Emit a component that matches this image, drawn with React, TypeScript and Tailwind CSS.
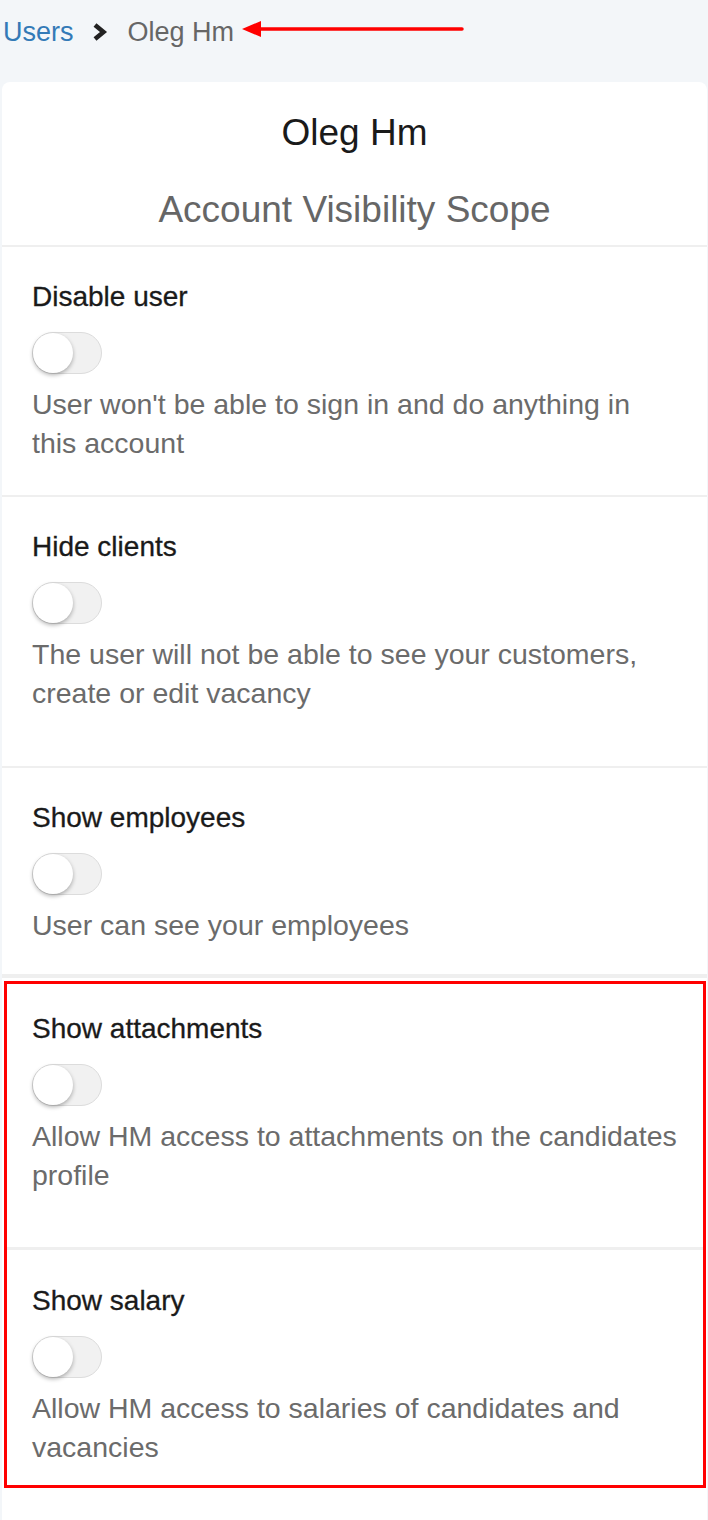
import React from 'react'

interface Setting {
  title: string
  description: string
  pad: string
}

const topSettings: Setting[] = [
  { title: 'Disable user', description: "User won't be able to sign in and do anything in this account", pad: 'pt-[33px] pb-[32px]' },
  { title: 'Hide clients', description: 'The user will not be able to see your customers, create or edit vacancy', pad: 'pt-[33px] pb-[53px]' },
  { title: 'Show employees', description: 'User can see your employees', pad: 'pt-[33px] pb-[29px]' },
]

function Toggle() {
  return (
    <div className="relative w-[70px] h-[42px] rounded-full bg-[#f1f1f1] border border-[#dcdcdc]">
      <div className="absolute left-0 top-0 w-[40px] h-[40px] rounded-full bg-white shadow-[0_2px_4px_rgba(0,0,0,0.3)]" />
    </div>
  )
}

function SettingRow({ setting, className }: { setting: Setting; className: string }) {
  return (
    <div className={className}>
      <div className="text-[28px] leading-[34px] text-[#1a1a1a] [-webkit-text-stroke:0.3px_#1a1a1a]">{setting.title}</div>
      <div className="mt-[18px]">
        <Toggle />
      </div>
      <p className="mt-[11px] text-[28.5px] leading-[39px] text-[#6b6b6b] pr-[20px]">{setting.description}</p>
    </div>
  )
}

export default function App() {
  return (
    <div className="min-h-[1520px] bg-[#f3f6f9] font-['Liberation_Sans',Arial,sans-serif]">
      {/* Breadcrumb */}
      <div className="h-[82px] pt-[14px] pl-[3px] flex items-start">
        <div className="flex items-center h-[36px]">
          <span className="text-[27px] leading-[36px] text-[#337ab7]">Users</span>
          <svg className="ml-[18px]" width="16" height="20" viewBox="0 0 16 20" fill="none">
            <polyline points="3,3 11.5,10 3,17" stroke="#222" strokeWidth="4.5" strokeLinejoin="miter" />
          </svg>
          <span className="ml-[20px] text-[27px] leading-[36px] text-[#666]">Oleg Hm</span>
          <svg className="ml-[8px] -mt-[7px]" width="222" height="20" viewBox="0 0 222 20" fill="none">
            <line x1="17" y1="10" x2="220" y2="10" stroke="#f00" strokeWidth="3.5" strokeLinecap="round" />
            <polygon points="0,10 19,2 19,18" fill="#f00" />
          </svg>
        </div>
      </div>

      {/* Card */}
      <div className="ml-[2px] mr-[1px] bg-white rounded-t-[8px] min-h-[1438px]">
        <div className="pt-[29px] pb-[13px] text-center">
          <div className="text-[37px] leading-[44px] text-[#1a1a1a]">Oleg Hm</div>
          <div className="mt-[33px] text-[37px] leading-[44px] text-[#666]">Account Visibility Scope</div>
        </div>

        {topSettings.map((s) => (
          <div key={s.title}>
            <div className="h-[2px] bg-[#efefef]" />
            <SettingRow setting={s} className={`px-[30px] ${s.pad}`} />
          </div>
        ))}
        <div className="h-[4px] bg-[#efefef]" />

        {/* Highlighted block */}
        <div className="mt-[3px] ml-[2px] mr-[1px] border-[3px] border-[#ff0000]">
          <SettingRow
            setting={{ title: 'Show attachments', description: 'Allow HM access to attachments on the candidates profile', pad: '' }}
            className="pl-[25px] pt-[28px] pb-[52px]"
          />
          <div className="h-[3px] bg-[#efefef]" />
          <SettingRow
            setting={{ title: 'Show salary', description: 'Allow HM access to salaries of candidates and vacancies', pad: '' }}
            className="pl-[25px] pt-[34px] pb-[18px]"
          />
        </div>
      </div>
    </div>
  )
}
